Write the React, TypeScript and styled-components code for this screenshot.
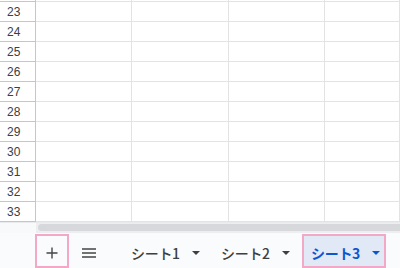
import React from "react";
import styled, { createGlobalStyle } from "styled-components";

const GlobalStyle = createGlobalStyle`
  html, body {
    margin: 0;
    padding: 0;
    background: #ffffff;
  }
  * { box-sizing: border-box; }
`;

// row 22 is only a sliver at the top, so it has no visible label
const ROWS = [22, 23, 24, 25, 26, 27, 28, 29, 30, 31, 32, 33];
const SHEETS = ["シート1", "シート2", "シート3"];

const App = () => {
  return (
    <>
      <GlobalStyle />
      <Screen>
        <GridArea>
          {ROWS.map((n, i) => (
            <Row key={n}>
              <RowHeader>{i === 0 ? "" : n}</RowHeader>
              <Cell />
              <Cell />
              <Cell />
              <Cell />
            </Row>
          ))}
        </GridArea>
        <ScrollBar>
          <ScrollCorner />
          <ScrollTrack>
            <ScrollThumb />
          </ScrollTrack>
        </ScrollBar>
        <TabBar>
          <IconButton $marked>
            <svg width="12" height="12" viewBox="0 0 12 12">
              <path d="M6 0.5v11M0.5 6h11" stroke="#444746" strokeWidth="1.4" fill="none" />
            </svg>
          </IconButton>
          <IconButton>
            <svg width="14" height="10" viewBox="0 0 14 10">
              <path d="M0 1h14M0 5h14M0 9h14" stroke="#444746" strokeWidth="1.5" fill="none" />
            </svg>
          </IconButton>
          <Tabs>
            {SHEETS.map((name, i) => (
              <SheetTab key={name} $active={i === 2}>
                <span>{name}</span>
                <Caret viewBox="0 0 8 4">
                  <path d="M0 0h8L4 4z" />
                </Caret>
              </SheetTab>
            ))}
          </Tabs>
        </TabBar>
      </Screen>
    </>
  );
};

export default App;

const Screen = styled.div`
  width: 400px;
  height: 268px;
  overflow: hidden;
  display: flex;
  flex-direction: column;
  background: #ffffff;
`;

const GridArea = styled.div`
  height: 222px;
  overflow: hidden;
  display: flex;
  flex-direction: column;
  justify-content: flex-end;
`;

const Row = styled.div`
  flex: 0 0 20px;
  display: grid;
  grid-template-columns: 36px 96px 97px 96px 1fr;
`;

const RowHeader = styled.div`
  border-right: 1px solid #c4c7c5;
  border-bottom: 1px solid #c4c7c5;
  display: flex;
  align-items: center;
  justify-content: flex-start;
  padding-left: 7px;
  padding-top: 1px;
  font-family: "Liberation Sans", Arial, sans-serif;
  font-size: 12px;
  color: #3c4043;
`;

const Cell = styled.div`
  border-right: 1px solid #e2e3e3;
  border-bottom: 1px solid #e2e3e3;
`;

const ScrollBar = styled.div`
  height: 11px;
  display: flex;
  border-top: 1px solid #e8eaed;
`;

const ScrollCorner = styled.div`
  width: 36px;
  background: #f8f9fa;
`;

const ScrollTrack = styled.div`
  flex: 1;
  background: #eceef0;
  padding: 1px 0 2px 2px;
  display: flex;
`;

const ScrollThumb = styled.div`
  flex: 1;
  border-radius: 4px 0 0 4px;
  background: #d6d8dc;
`;

const TabBar = styled.div`
  flex: 1;
  display: flex;
  align-items: stretch;
  background: #f9fbfd;
  padding: 1px 0 0 35px;
`;

const IconButton = styled.div<{ $marked?: boolean }>`
  width: ${(p) => (p.$marked ? "34px" : "40px")};
  margin-right: ${(p) => (p.$marked ? "0" : "13px")};
  display: flex;
  align-items: center;
  justify-content: center;
  padding-top: 4px;
  border: 2px solid ${(p) => (p.$marked ? "#f3a8c8" : "transparent")};
`;

const Tabs = styled.div`
  display: flex;
  gap: 6px;
`;

const SheetTab = styled.div<{ $active?: boolean }>`
  width: 84px;
  display: flex;
  align-items: center;
  padding: 4px 0 0 7px;
  font-family: "Noto Sans CJK JP", "Noto Sans", sans-serif;
  font-size: 14px;
  font-weight: ${(p) => (p.$active ? 700 : 500)};
  color: ${(p) => (p.$active ? "#0b57d0" : "#3c4043")};
  background: ${(p) => (p.$active ? "#e1e8f6" : "transparent")};
  border: 2px solid ${(p) => (p.$active ? "#f3a8c8" : "transparent")};
  fill: currentColor;

  span {
    letter-spacing: -0.3px;
  }
`;

const Caret = styled.svg`
  width: 8px;
  height: 4px;
  margin-left: 12px;
`;
